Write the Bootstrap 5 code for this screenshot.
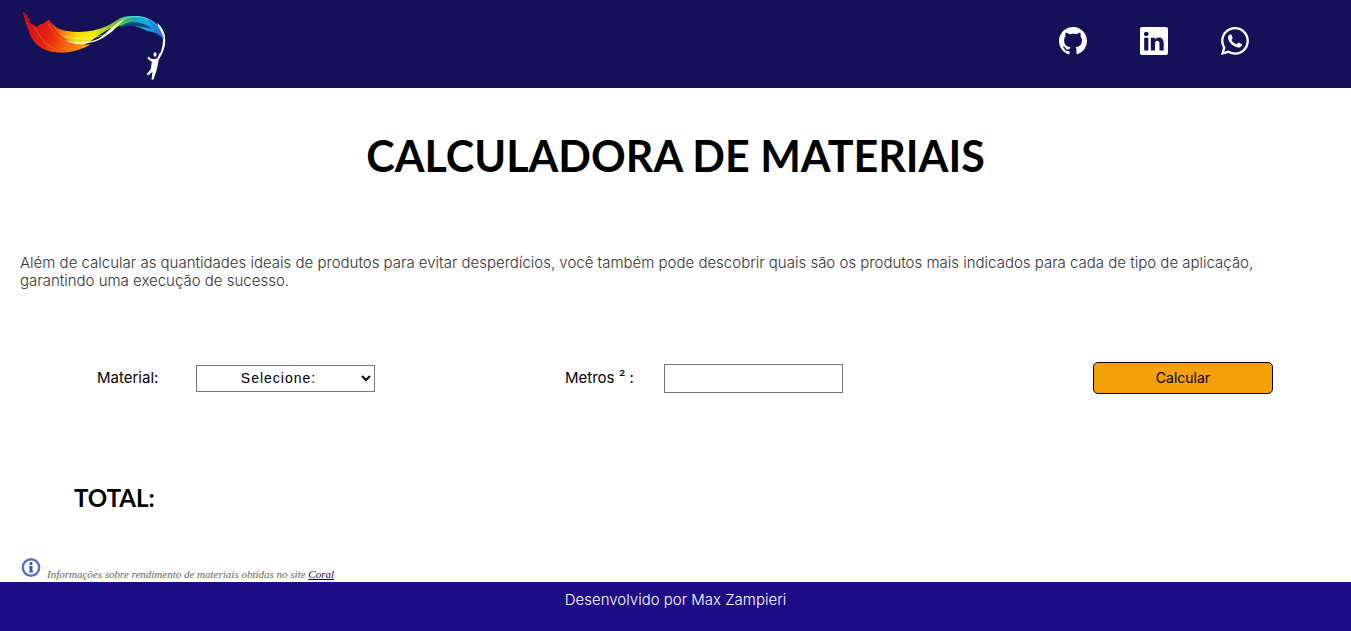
<!DOCTYPE html>
<html lang="pt-BR">
<head>
<meta charset="utf-8">
<meta name="viewport" content="width=device-width, initial-scale=1">
<title>Calculadora de Materiais</title>
<link href="https://cdn.jsdelivr.net/npm/bootstrap@5.3.0/dist/css/bootstrap.min.css" rel="stylesheet">
<style>
  body { font-family: Inter, "Open Sans", sans-serif; font-size: 15px; line-height: 18px; color: #000; }
  .topo { background: #141158; height: 88px; padding: 0 102px 0 20px; }
  .redes { gap: 53px; padding-bottom: 6px; }
  .redes svg, .logo svg { display: block; }
  .titulo { font: 700 43px/56px Lato, sans-serif; margin: 40px 0 70px; }
  .intro { font-weight: 300; margin: 0 60px 72px 20px; color: #333; }
  .calculo { display: grid; grid-template-columns: 468fr 468fr 240fr; padding: 0 78px 0 97px; align-items: center; }
  .calculo label { width: 99px; }
  .campo { width: 179px; border: 1px solid #767676; background-color: #fff; color: #000; font: 14px/18px "Liberation Sans", sans-serif; letter-spacing: 1px; text-align: center; }
  select.campo { height: 27px; padding-right: 2px; text-align-last: center; }
  input.campo { height: 29px; }
  .calcular { width: 180px; height: 32px; border: 1px solid #000; border-radius: 5px; background: #f4a109; font-size: 14px; color: #000; }
  .total { font: 700 24px/30px Lato, sans-serif; margin: 89px 0 44px 74px; }
  .fonte { font: italic 11px/16px "Liberation Serif", serif; color: #666; margin-left: 20px; gap: 5px; height: 25px; }
  .fonte a { color: #280058; }
  .rodape { background: #1e0c88; color: #fff; height: 49px; padding-top: 9px; font-weight: 300; }
  @media (max-width: 1100px) {
    .calculo { grid-template-columns: 1fr; gap: 24px; padding: 0 20px; }
    .total { margin-left: 20px; }
  }
</style>
</head>
<body>
<header class="topo d-flex align-items-center justify-content-between">
  <a class="logo" href="#" aria-label="Início">
    <svg width="150" height="76" viewBox="20 7 150 76">
      <defs>
        <linearGradient id="fita" gradientUnits="userSpaceOnUse" x1="24" y1="18" x2="166" y2="18">
          <stop offset="0" stop-color="#d40c18"/><stop offset=".17" stop-color="#e82813"/><stop offset=".27" stop-color="#f77b0b"/><stop offset=".37" stop-color="#fcdc05"/><stop offset=".49" stop-color="#f3ec08"/><stop offset=".59" stop-color="#9dce20"/><stop offset=".69" stop-color="#55bc48"/><stop offset=".78" stop-color="#16adb8"/><stop offset=".87" stop-color="#10aeea"/><stop offset="1" stop-color="#1a47bc"/>
        </linearGradient>
        <linearGradient id="fogo" gradientUnits="userSpaceOnUse" x1="26" y1="16" x2="86" y2="50">
          <stop offset="0" stop-color="#c80c18"/><stop offset=".45" stop-color="#e72512"/><stop offset=".75" stop-color="#f46a0a"/><stop offset="1" stop-color="#fba805"/>
        </linearGradient>
      </defs>
      <path d="M23 13l5 4-2 2 4 1-2 3 9 5 4-3 2 0 6-4c4 6 10 10 18 11 13 2 27 1 40-5 9-4 13-10 23-10 14 0 24 3 31 13 4 6 5 9 4 14-4-8-8-10-17-12-12-5-17-7-29-5-12 2-19 9-30 16C70 53 55 57 42 49 31 43 29 32 26 24z" fill="url(#fita)"/>
      <path d="M23 13l5 4-2 2 4 1-2 3 9 5 4-3 2 0 6-4c4 8 8 12 14 17 7 6 15 9 28 7-14 9-34 12-49 4C31 43 29 32 26 24z" fill="url(#fogo)"/>
      <path d="M34 28c6 10 12 20 26 24M49 25c4 11 13 19 28 24" fill="none" stroke="#ff6815" stroke-width="1.2" opacity=".5"/>
      <path d="M59 35c14 6 30 6 46 0-11 6-32 8-46 0z" fill="#fff59a"/>
      <path d="M64 41c17 5 33 2 46-8-12 11-30 16-46 8z" fill="#fff"/>
      <path d="M91 44c13-5 21-19 34-24-8 7-15 18-34 24z" fill="#eaffc2"/>
      <path d="M119 29c9-8 21-8 33 1-9-2-23-5-33-1z" fill="#064b86"/>
      <path d="M121 21c15-7 30-3 38 8" fill="none" stroke="#65e5ed" stroke-width="1"/>
      <path d="M158 25c6 5 8 13 7 21-2 8-4 12-9 18 4-8 7-15 7-24-1-6-3-11-5-15z" fill="#fff"/>
      <path d="M148 20c10 6 15 13 16 21-5-8-10-9-16-21z" fill="#207edd"/>
      <path d="M157 24c5 4 8 10 8 17-1-5-5-9-8-17z" fill="#fff"/>
      <ellipse cx="155" cy="55.500" rx="1.500" ry="2.200" fill="#fff"/>
      <path d="M148.500 57.500q2 3 5.500 2.500l3-.5 3-6 1 1-2.500 7-1 6-1 4-3 9-2 .3 1-8-3.500 3-2 .3-.2-1 4-5 1-7.500q-3-.8-4.300-3.600z" fill="#fff"/>
    </svg>
  </a>
  <nav class="redes d-flex" aria-label="Redes sociais">
    <a href="#" aria-label="GitHub"><svg width="28" height="28" viewBox="0 0 16 16" fill="#fff"><path d="M8 0C3.580 0 0 3.580 0 8c0 3.540 2.290 6.530 5.470 7.590.4.070.55-.17.55-.38 0-.19-.01-.82-.01-1.490-2.010.37-2.530-.49-2.690-.94-.09-.23-.48-.94-.82-1.130-.28-.15-.68-.52-.01-.53.63-.01 1.080.58 1.230.82.72 1.210 1.870.87 2.330.66.070-.52.28-.87.51-1.070-1.780-.2-3.640-.89-3.640-3.950 0-.87.31-1.590.82-2.150-.08-.2-.36-1.020.08-2.120 0 0 .67-.21 2.200.82A7.600 7.600 0 0 1 8 3.860c.68 0 1.360.09 2 .27 1.530-1.040 2.200-.82 2.200-.82.44 1.100.16 1.920.08 2.120.51.56.82 1.270.82 2.150 0 3.070-1.870 3.750-3.650 3.950.29.25.54.73.54 1.480 0 1.070-.01 1.930-.01 2.200 0 .21.15.46.55.38A8 8 0 0 0 16 8c0-4.420-3.580-8-8-8z"/></svg></a>
    <a href="#" aria-label="LinkedIn"><svg width="28" height="28" viewBox="0 0 16 16" fill="#fff"><path d="M0 1.146C0 .513.526 0 1.175 0h13.650C15.474 0 16 .513 16 1.146v13.708c0 .633-.526 1.146-1.175 1.146H1.175C.526 16 0 15.487 0 14.854zM4.750 13.400V6.169H2.400V13.400zM3.570 5.180c.84 0 1.360-.55 1.360-1.250C4.920 3.220 4.410 2.680 3.590 2.680S2.220 3.220 2.220 3.930c0 .7.520 1.250 1.330 1.250zM8.600 13.400V9.360c0-.22.020-.43.080-.59.170-.43.570-.88 1.230-.88.870 0 1.220.66 1.220 1.640v3.870h2.400V9.250c0-2.220-1.180-3.250-2.760-3.250-1.280 0-1.850.71-2.170 1.200V6.169H6.200V13.400z"/></svg></a>
    <a href="#" aria-label="WhatsApp"><svg width="28" height="28" viewBox="0 0 16 16" fill="#fff"><path d="M13.601 2.326A7.850 7.850 0 0 0 7.994 0C3.627 0 .068 3.558.064 7.926c0 1.399.366 2.760 1.057 3.965L0 16l4.204-1.102a7.900 7.900 0 0 0 3.790.965h.004c4.368 0 7.926-3.558 7.930-7.930a7.900 7.900 0 0 0-2.327-5.607M7.994 14.521a6.600 6.600 0 0 1-3.356-.920l-.240-.144-2.494.654.666-2.433-.156-.251a6.560 6.560 0 0 1-1.007-3.505c0-3.626 2.957-6.584 6.591-6.584a6.560 6.560 0 0 1 4.660 1.931 6.560 6.560 0 0 1 1.928 4.660c-.004 3.639-2.961 6.592-6.592 6.592m3.615-4.934c-.197-.099-1.170-.578-1.353-.646-.182-.065-.315-.099-.445.099-.133.197-.513.646-.627.775-.114.133-.232.148-.430.050-.197-.100-.836-.308-1.592-.985-.590-.525-.985-1.175-1.103-1.372-.114-.198-.011-.304.088-.403.087-.088.197-.232.296-.346.100-.114.133-.198.198-.330.065-.134.034-.248-.015-.347-.050-.099-.445-1.076-.612-1.470-.160-.389-.323-.335-.445-.340-.114-.007-.247-.007-.380-.007a.730.730 0 0 0-.529.247c-.182.198-.691.677-.691 1.654s.710 1.916.810 2.049c.098.133 1.394 2.132 3.383 2.992.470.205.840.326 1.129.418.475.152.904.129 1.246.080.380-.058 1.171-.480 1.338-.943.164-.464.164-.860.114-.943-.049-.084-.182-.133-.380-.232"/></svg></a>
  </nav>
</header>
<main>
  <h1 class="titulo text-center">CALCULADORA DE MATERIAIS</h1>
  <p class="intro">Além de calcular as quantidades ideais de produtos para evitar desperdícios, você também pode descobrir quais são os produtos mais indicados para cada de tipo de aplicação, garantindo uma execução de sucesso.</p>
  <form class="calculo">
    <div class="d-flex align-items-center">
      <label for="material">Material:</label>
      <select class="campo" id="material"><option>Selecione:</option></select>
    </div>
    <div class="d-flex align-items-center">
      <label for="metros">Metros ² :</label>
      <input class="campo" id="metros" type="text">
    </div>
    <button class="calcular ms-auto" type="button">Calcular</button>
  </form>
  <h2 class="total">TOTAL:</h2>
  <p class="fonte d-flex mb-0">
    <svg width="22" height="22" viewBox="0 0 22 22" aria-hidden="true"><circle cx="11" cy="10.500" r="8.200" fill="#fff" stroke="#5b72c0" stroke-width="2.400"/><circle cx="11" cy="6.500" r="1.500" fill="#3c4c91"/><path d="M9 9h3.500v5.600h.8v1h-4.600v-1h.8V10H9z" fill="#4358a5"/></svg>
    <span class="align-self-end">Informações sobre rendimento de materiais obtidas no site <a href="#">Coral</a></span>
  </p>
</main>
<footer class="rodape text-center">Desenvolvido por Max Zampieri</footer>
<script src="https://cdn.jsdelivr.net/npm/bootstrap@5.3.0/dist/js/bootstrap.bundle.min.js"></script>
</body>
</html>
